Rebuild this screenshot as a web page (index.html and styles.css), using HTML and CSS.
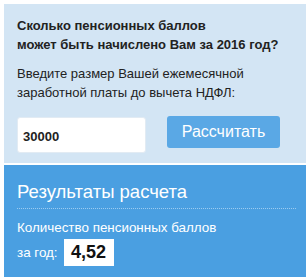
FILE: index.html
```html
<!DOCTYPE html>
<html lang="ru">
<head>
    <meta charset="UTF-8">
    <title>Пенсионный калькулятор</title>
<link rel="stylesheet" href="styles.css">
</head>
<body>
    <div class="calc">
        <div class="calc-form">
            <h2>Сколько пенсионных баллов<br>может быть начислено Вам за 2016 год?</h2>
            <p>Введите размер Вашей ежемесячной<br>заработной платы до вычета НДФЛ:</p>
            <div class="calc-row">
                <input type="text" class="salary" value="30000">
                <button class="calc-button">Рассчитать</button>
            </div>
        </div>
        <div class="calc-result">
            <h3>Результаты расчета</h3>
            <p>Количество пенсионных баллов</p>
            <div class="result-row">
                <span>за год:</span>
                <span class="result-value">4,52</span>
            </div>
        </div>
    </div>
</body>
</html>
```

FILE: styles.css
```css
body {
    margin: 0;
    font-family: "Liberation Sans", Arial, sans-serif;
    background: #fff;
}

.calc {
    padding: 4px 0 0 4px;
}

.calc-form {
    background-color: #d3e5f4;
    padding: 12px 10px 10px 13px;
    color: #222;
}

.calc-form h2 {
    font-size: 13px;
    line-height: 19px;
    margin: 0 0 10px 0;
    font-weight: bold;
    white-space: nowrap;
}

.calc-form p {
    font-size: 13px;
    line-height: 19px;
    margin: 0 0 14px 0;
    white-space: nowrap;
}

.calc-row {
    display: flex;
    align-items: flex-start;
}

.salary {
    width: 129px;
    height: 36px;
    box-sizing: border-box;
    margin-top: 1px;
    border: 1px solid #e2ebf3;
    border-radius: 3px;
    background: #fff;
    padding: 2px 5px 0;
    font-family: inherit;
    font-size: 13px;
    font-weight: bold;
    color: #222;
    outline: none;
}

.calc-button {
    margin-left: 21px;
    width: 113px;
    height: 32px;
    border: none;
    border-radius: 3px;
    background-color: #5aa8e5;
    color: #fff;
    font-family: inherit;
    font-size: 16px;
    cursor: pointer;
}

.calc-result {
    margin-top: 2px;
    background-color: #4a9fe1;
    color: #fff;
    padding: 15px 10px 12px 13px;
}

.calc-result h3 {
    font-size: 18.5px;
    font-weight: normal;
    line-height: 24px;
    margin: 0;
    padding-bottom: 4px;
    border-bottom: 1px dotted #9ccbf0;
}

.calc-result p {
    font-size: 13.4px;
    line-height: 19px;
    margin: 9px 0 2px 0;
}

.result-row {
    display: flex;
    align-items: center;
    font-size: 13.4px;
}

.result-value {
    margin-left: 6px;
    width: 50px;
    height: 27px;
    line-height: 27px;
    background: #fff;
    color: #111;
    font-weight: bold;
    font-size: 18px;
    text-align: center;
}
```
